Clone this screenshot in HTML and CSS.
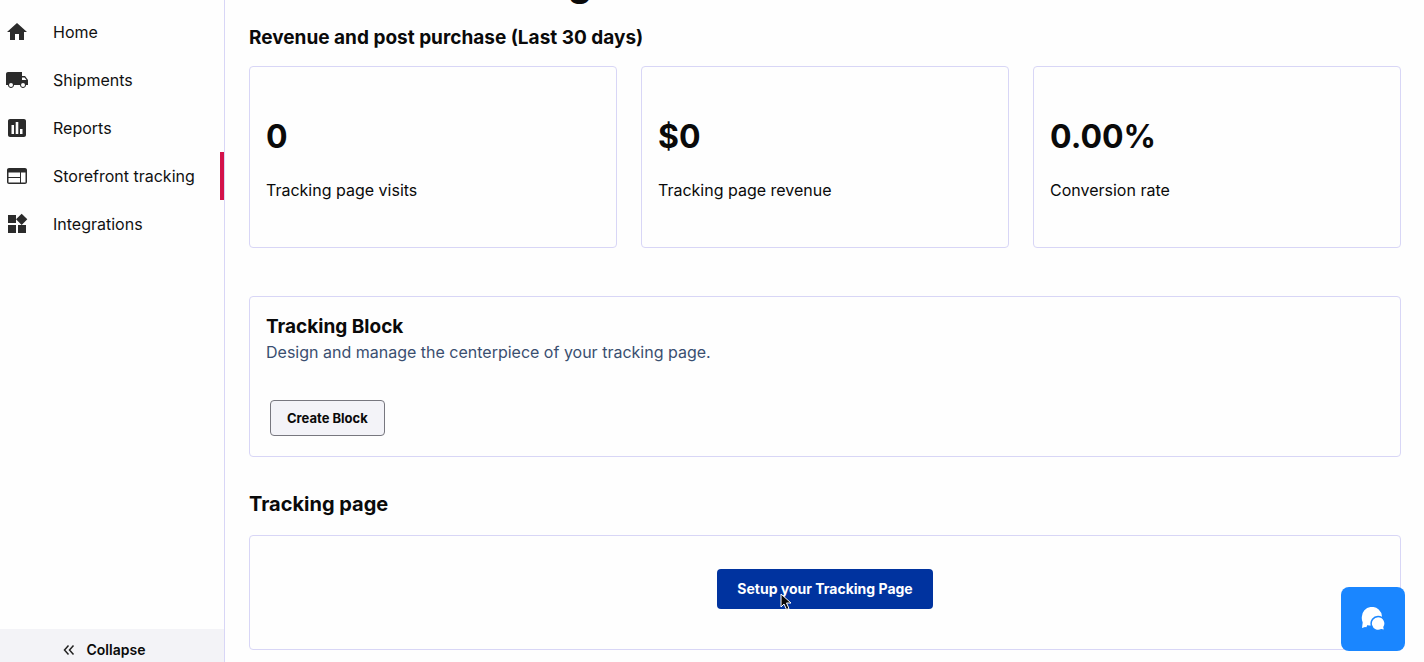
FILE: index.html
```html
<!DOCTYPE html>
<html lang="en">
  <head>
    <meta charset="UTF-8" />
    <meta name="viewport" content="width=device-width, initial-scale=1.0" />
    <title>Storefront tracking</title>
    <link rel="stylesheet" href="styles.css">
  </head>

  <body>
    <div class="layout">
      <aside class="sidebar">
        <nav class="menu">
          <a class="menu-item" href="#">
            <svg class="icon" viewBox="0 0 24 24"><path d="M10 20v-6h4v6h5v-8h3L12 3 2 12h3v8z" /></svg>
            Home
          </a>
          <a class="menu-item" href="#">
            <svg class="icon" viewBox="0 0 24 24"><path d="M20 8h-3V4H3c-1.100 0-2 .9-2 2v11h2c0 1.660 1.340 3 3 3s3-1.340 3-3h6c0 1.660 1.340 3 3 3s3-1.340 3-3h2v-5l-3-4z" /><circle class="hole" cx="6" cy="17" r="2" /><circle class="hole" cx="18" cy="17" r="2" /><path class="hole" d="M19.500 9.500l1.960 2.500H17V9.500z" /></svg>
            Shipments
          </a>
          <a class="menu-item" href="#">
            <svg class="icon" viewBox="0 0 24 24"><path d="M19 3H5c-1.100 0-2 .9-2 2v14c0 1.100.9 2 2 2h14c1.100 0 2-.9 2-2V5c0-1.100-.9-2-2-2zM9 18H6.500V9H9v9zm4.300 0h-2.600V6h2.600v12zm4.200 0H15v-5h2.500v5z" /></svg>
            Reports
          </a>
          <a class="menu-item active" href="#">
            <svg class="icon" viewBox="0 0 24 24"><path d="M20 4H4c-1.100 0-2 .9-2 2v12c0 1.100.9 2 2 2h16c1.100 0 2-.9 2-2V6c0-1.100-.9-2-2-2zm-5 14.500H3.500v-4.500H15v4.500zm0-5.500H3.500V8.500H15V13zm5.500 5.500H16v-10h4.500v10z" /></svg>
            Storefront tracking
          </a>
          <a class="menu-item" href="#">
            <svg class="icon" viewBox="0 0 24 24"><path d="M13 13v8h8v-8h-8zM3 21h8v-8H3v8zM3 3v8h8V3H3zm13.660-1.310L11 7.340 16.660 13l5.660-5.660-5.660-5.650z" /></svg>
            Integrations
          </a>
        </nav>
        <button class="collapse" type="button">
          <svg class="chevrons" viewBox="0 0 12 12"><path d="M5.500 1.500L1.500 6l4 4.500M10.500 1.500L6.500 6l4 4.500" /></svg>
          Collapse
        </button>
      </aside>

      <main class="content">
        <h1 class="page-title">Storefront tracking</h1>

        <h2 class="section-title">Revenue and post purchase (Last 30 days)</h2>
        <div class="stats">
          <div class="card stat">
            <strong class="stat-value">0</strong>
            <span class="stat-label">Tracking page visits</span>
          </div>
          <div class="card stat">
            <strong class="stat-value">$0</strong>
            <span class="stat-label">Tracking page revenue</span>
          </div>
          <div class="card stat">
            <strong class="stat-value">0.00%</strong>
            <span class="stat-label">Conversion rate</span>
          </div>
        </div>

        <section class="card block">
          <h2 class="block-title">Tracking Block</h2>
          <p class="block-text">Design and manage the centerpiece of your tracking page.</p>
          <button class="btn" type="button">Create Block</button>
        </section>

        <h2 class="setup-title">Tracking page</h2>
        <section class="card setup">
          <div class="setup-action">
            <button class="btn-primary" type="button">Setup your Tracking Page</button>
            <svg class="cursor" viewBox="0 0 12 18"><path d="M1 1v13l3-3 2.500 5.500 2.500-1-2.500-5.500H11z" /></svg>
          </div>
        </section>
      </main>
    </div>

    <button class="chat" type="button" aria-label="Chat">
      <svg class="chat-icon" viewBox="0 0 24 24">
        <path class="bubble" d="M.8 10.500a10 10 0 0 1 20.200-1v9H9.500c-1.200 0-2.200-.2-3-.6L5.300 20.200 4 20 1 21l.7-5.600A10 10 0 0 1 .8 10.500z" />
        <path class="bubble front" d="M17 9.500a7 7 0 0 1 6 10.700l.8 3.200-3.400-.7A7 7 0 1 1 17 9.500z" />
      </svg>
    </button>
  </body>
</html>
```

FILE: styles.css
```css
* {
  box-sizing: border-box;
  margin: 0;
  padding: 0;
}

body {
  height: 100vh;
  overflow: hidden;
  background-color: #fefefe;
  color: #0a0a0a;
  font-family: Inter, "Liberation Sans", sans-serif;
  font-size: 16px;
  line-height: 24px;
}

button {
  font-family: inherit;
  cursor: pointer;
}

.layout {
  display: flex;
  height: 100%;
}

/* sidebar */
.sidebar {
  display: flex;
  flex-direction: column;
  justify-content: space-between;
  flex-shrink: 0;
  width: 225px;
  padding-top: 8px;
  border-right: 1px solid #d8d6f6;
}

.menu-item {
  display: flex;
  align-items: center;
  gap: 24px;
  height: 48px;
  padding-left: 5px;
  border-right: 4px solid transparent;
  color: #111;
  text-decoration: none;
}

.menu-item.active {
  border-right-color: #d3124a;
}

.icon {
  width: 24px;
  height: 24px;
  fill: #2b2b2b;
}

.icon .hole {
  fill: #fefefe;
}

.collapse {
  display: flex;
  align-items: center;
  justify-content: center;
  gap: 12px;
  padding: 11px 16px 2px 0;
  border: none;
  background-color: #f3f3f7;
  color: #0a0a0a;
  font-size: 14px;
  font-weight: 600;
  line-height: 20px;
}

.chevrons {
  width: 12px;
  height: 12px;
  fill: none;
  stroke: #222;
  stroke-width: 1.5;
}

/* content */
.content {
  flex: 1;
  padding: 0 23px 0 24px;
}

/* scrolled almost out of view */
.page-title {
  margin-top: -39px;
  font-size: 37px;
  line-height: 44px;
}

.section-title {
  margin: 19px 0 14px;
  font-size: 19px;
  font-weight: 700;
  line-height: 28px;
}

.card {
  border: 1px solid #d8d6f6;
  border-radius: 4px;
}

.stats {
  display: grid;
  grid-template-columns: repeat(3, 1fr);
  gap: 24px;
  margin-bottom: 48px;
}

.stat {
  display: flex;
  flex-direction: column;
  gap: 21px;
  padding: 50px 16px 45px;
}

.stat-value {
  font-size: 32px;
  font-weight: 700;
  line-height: 40px;
}

.block {
  margin-bottom: 32px;
  padding: 16px;
}

.block-title {
  font-size: 19px;
  font-weight: 700;
  line-height: 28px;
}

.block-text {
  margin-bottom: 33px;
  color: #3a4f70;
  line-height: 22px;
}

.btn {
  margin: 4px;
  padding: 8px 16px;
  border: 1px solid #77777f;
  border-radius: 4px;
  background-color: #f3f3f8;
  color: #0a0a0a;
  font-size: 13px;
  font-weight: 700;
  line-height: 18px;
}

.setup-title {
  margin-bottom: 16px;
  font-size: 20px;
  font-weight: 700;
  line-height: 30px;
}

.setup {
  display: flex;
  justify-content: center;
  padding: 33px 16px 40px;
}

.setup-action {
  position: relative;
}

.btn-primary {
  padding: 10px 20px;
  border: none;
  border-radius: 4px;
  background-color: #00339f;
  color: #fff;
  font-size: 14px;
  font-weight: 700;
  line-height: 20px;
}

.cursor {
  position: absolute;
  top: 24px;
  left: 63px;
  width: 12px;
  height: 18px;
  fill: #0a0a0a;
  stroke: #fff;
}

/* chat button */
.chat {
  position: fixed;
  right: 19px;
  bottom: 11px;
  display: flex;
  align-items: center;
  justify-content: center;
  width: 64px;
  height: 64px;
  border: none;
  border-radius: 8px;
  background-color: #1a86ff;
}

.chat-icon {
  width: 24px;
  height: 24px;
}

.bubble {
  fill: #fff;
}

.bubble.front {
  stroke: #1a86ff;
  stroke-width: 1.5;
}
```
